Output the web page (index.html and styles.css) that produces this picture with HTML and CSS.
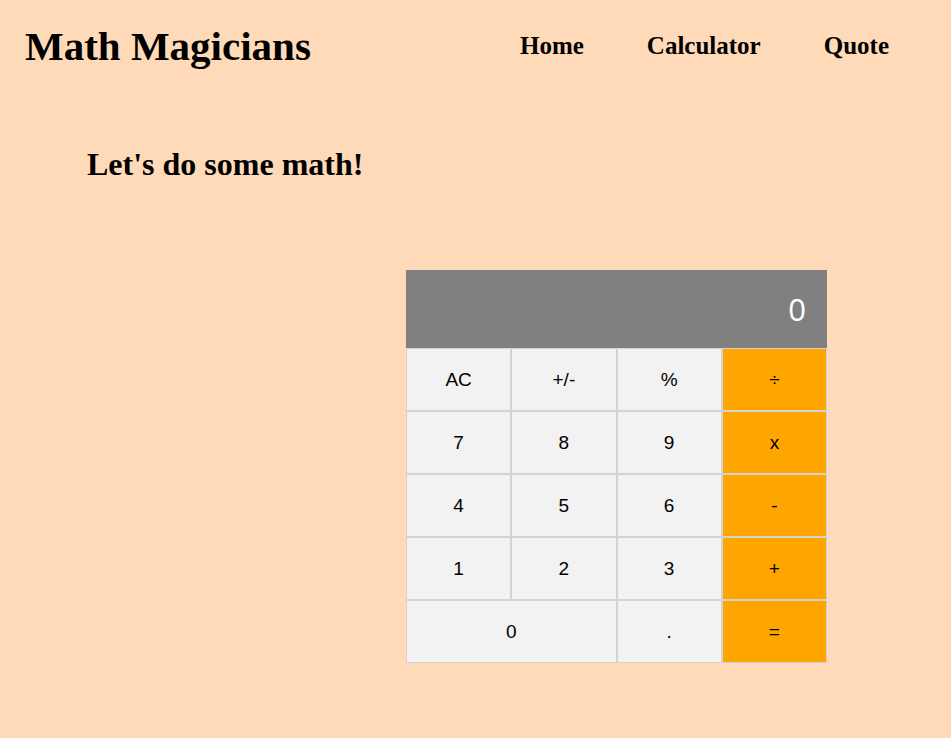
FILE: index.html
```html
<!DOCTYPE html>
<html>
<head>
<meta charset="utf-8">
<link rel="stylesheet" href="styles.css">
</head>
<body>
<header class="header">
  <h1 class="logo">Math Magicians</h1>
  <nav class="nav">
    <a class="nav-link" href="#">Home</a>
    <a class="nav-link" href="#">Calculator</a>
    <a class="nav-link" href="#">Quote</a>
  </nav>
</header>
<main class="main">
  <h2 class="title">Let's do some math!</h2>
  <div class="calc-wrap">
    <div class="calc">
      <div class="display">0</div>
      <button class="key">AC</button>
      <button class="key">+/-</button>
      <button class="key">%</button>
      <button class="key op">÷</button>
      <button class="key">7</button>
      <button class="key">8</button>
      <button class="key">9</button>
      <button class="key op">x</button>
      <button class="key">4</button>
      <button class="key">5</button>
      <button class="key">6</button>
      <button class="key op">-</button>
      <button class="key">1</button>
      <button class="key">2</button>
      <button class="key">3</button>
      <button class="key op">+</button>
      <button class="key zero">0</button>
      <button class="key">.</button>
      <button class="key op">=</button>
    </div>
  </div>
</main>
</body>
</html>
```
FILE: styles.css
```css
html, body {
  margin: 0;
  padding: 0;
  background: #ffdab9;
}
body {
  font-family: "Liberation Serif", serif;
  color: #000;
  min-height: 738px;
}
.header {
  display: flex;
  justify-content: space-between;
  align-items: center;
  padding: 22px 62px 0 25px;
  height: 48px;
}
.logo {
  margin: 0;
  font-size: 41px;
  font-weight: bold;
}
.nav {
  display: flex;
  gap: 63px;
}
.nav-link {
  color: #000;
  text-decoration: none;
  font-weight: bold;
  font-size: 25px;
}
.main {
  padding: 0 0 0 87px;
}
.title {
  margin: 75px 0 0 0;
  font-size: 32px;
  font-weight: bold;
  line-height: 38px;
}
.calc-wrap {
  padding: 87px 0 0 319px;
}
.calc {
  width: 421px;
  display: grid;
  grid-template-columns: repeat(4, 1fr);
  grid-template-rows: 78px repeat(5, 63px);
}
.display {
  grid-column: 1 / -1;
  background: #808080;
  color: #fff;
  font-family: "Open Sans", sans-serif;
  font-size: 31px;
  display: flex;
  align-items: center;
  justify-content: flex-end;
  padding-right: 21px;
}
.key {
  margin: 0;
  border: 1px solid #d3d3d3;
  background: #f2f2f2;
  font-family: "Liberation Sans", Arial, sans-serif;
  font-size: 19px;
  color: #000;
  padding: 0;
}
.key.op {
  background: #ffa500;
}
.key.zero {
  grid-column: span 2;
}
```
